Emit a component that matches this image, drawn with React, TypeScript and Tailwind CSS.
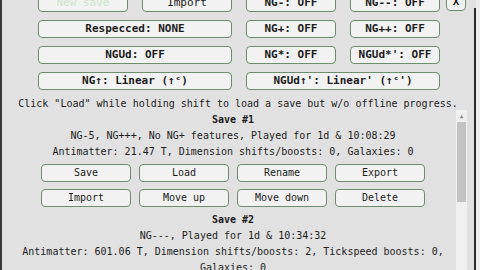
import React from "react";

const mono = { fontFamily: '"DejaVu Sans Mono", "Liberation Mono", monospace' };

const Btn = ({ children, className = "" }: { children: React.ReactNode; className?: string }) => (
  <div
    className={`flex items-center justify-center rounded-[4px] border border-[#6f8c6f] bg-[#f2f2f2] text-[11px] font-bold text-[#1c1c1c] whitespace-nowrap ${className}`}
  >
    {children}
  </div>
);

const SaveBtn = ({ label }: { label: string }) => (
  <div className="flex h-[18px] items-center justify-center rounded-[4px] border border-[#6f8c6f] bg-[#f2f2f2] text-[10px] text-[#1c1c1c]">
    {label}
  </div>
);

const saves = [
  {
    name: "Save #1",
    mods: "NG-5, NG+++, No NG+ features, Played for 1d & 10:08:29",
    stats: "Antimatter: 21.47 T, Dimension shifts/boosts: 0, Galaxies: 0",
  },
  {
    name: "Save #2",
    mods: "NG---, Played for 1d & 10:34:32",
    stats: "Antimatter: 601.06 T, Dimension shifts/boosts: 2, Tickspeed boosts: 0, Galaxies: 0",
  },
];

export default function App() {
  return (
    <div className="flex h-[270px] w-[480px] overflow-hidden bg-[#e1e1e1]" style={mono}>
      <div className="w-[2px] bg-[#3a3a3a]" />
      <div className="flex w-[472px] flex-col">
        <div className="mt-[-6px] flex gap-[6px] pl-[36px]">
          <div className="grid grid-cols-[90px_90px_90px_90px] auto-rows-[18px] gap-x-[14px] gap-y-[8px]">
            <Btn className="border-[#5c9c5c] bg-[#a2d9a2] font-normal text-[#cfe6cf]">New save</Btn>
            <Btn className="font-normal">Import</Btn>
            <Btn>NG-: OFF</Btn>
            <Btn>NG--: OFF</Btn>
            <Btn className="col-span-2">Respecced: NONE</Btn>
            <Btn>NG+: OFF</Btn>
            <Btn>NG++: OFF</Btn>
            <Btn className="col-span-2">NGUd: OFF</Btn>
            <Btn>NG*: OFF</Btn>
            <Btn>NGUd*': OFF</Btn>
            <Btn className="col-span-2">NG↑: Linear (↑ᶜ)</Btn>
            <Btn className="col-span-2">NGUd↑': Linear' (↑ᶜ')</Btn>
          </div>
          <Btn className="h-[17px] w-[20px]">X</Btn>
        </div>
        <p className="mt-[6px] text-center text-[10px] leading-[16px] text-[#1c1c1c]">
          Click "Load" while holding shift to load a save but w/o offline progress.
        </p>
        <div className="flex flex-1 pl-[8px]">
          <div className="flex w-[446px] flex-col text-[10px] leading-[16px] text-[#1c1c1c]">
            {saves.map((s) => (
              <div key={s.name} className="flex flex-col items-center text-center">
                <div className="font-bold">{s.name}</div>
                <div>{s.mods}</div>
                <div className="w-[432px]">{s.stats}</div>
                <div className="mb-[5px] mt-[4px] grid grid-cols-[90px_90px_90px_90px] gap-x-[8px] gap-y-[7px]">
                  {["Save", "Load", "Rename", "Export", "Import", "Move up", "Move down", "Delete"].map((l) => (
                    <SaveBtn key={l} label={l} />
                  ))}
                </div>
              </div>
            ))}
          </div>
          <div className="-mt-[2px] flex w-[11px] flex-col bg-[#f0f0f0]">
            <div className="flex h-[12px] items-center justify-center text-[6px] leading-none text-[#8a8a8a]">▲</div>
            <div className="mx-[1px] h-[80px] bg-[#c2c2c2]" />
          </div>
        </div>
      </div>
      <div className="mt-[8px] w-[2px] bg-[#2a2a2a]" />
      <div className="w-[4px] bg-[#ececec]" />
    </div>
  );
}
